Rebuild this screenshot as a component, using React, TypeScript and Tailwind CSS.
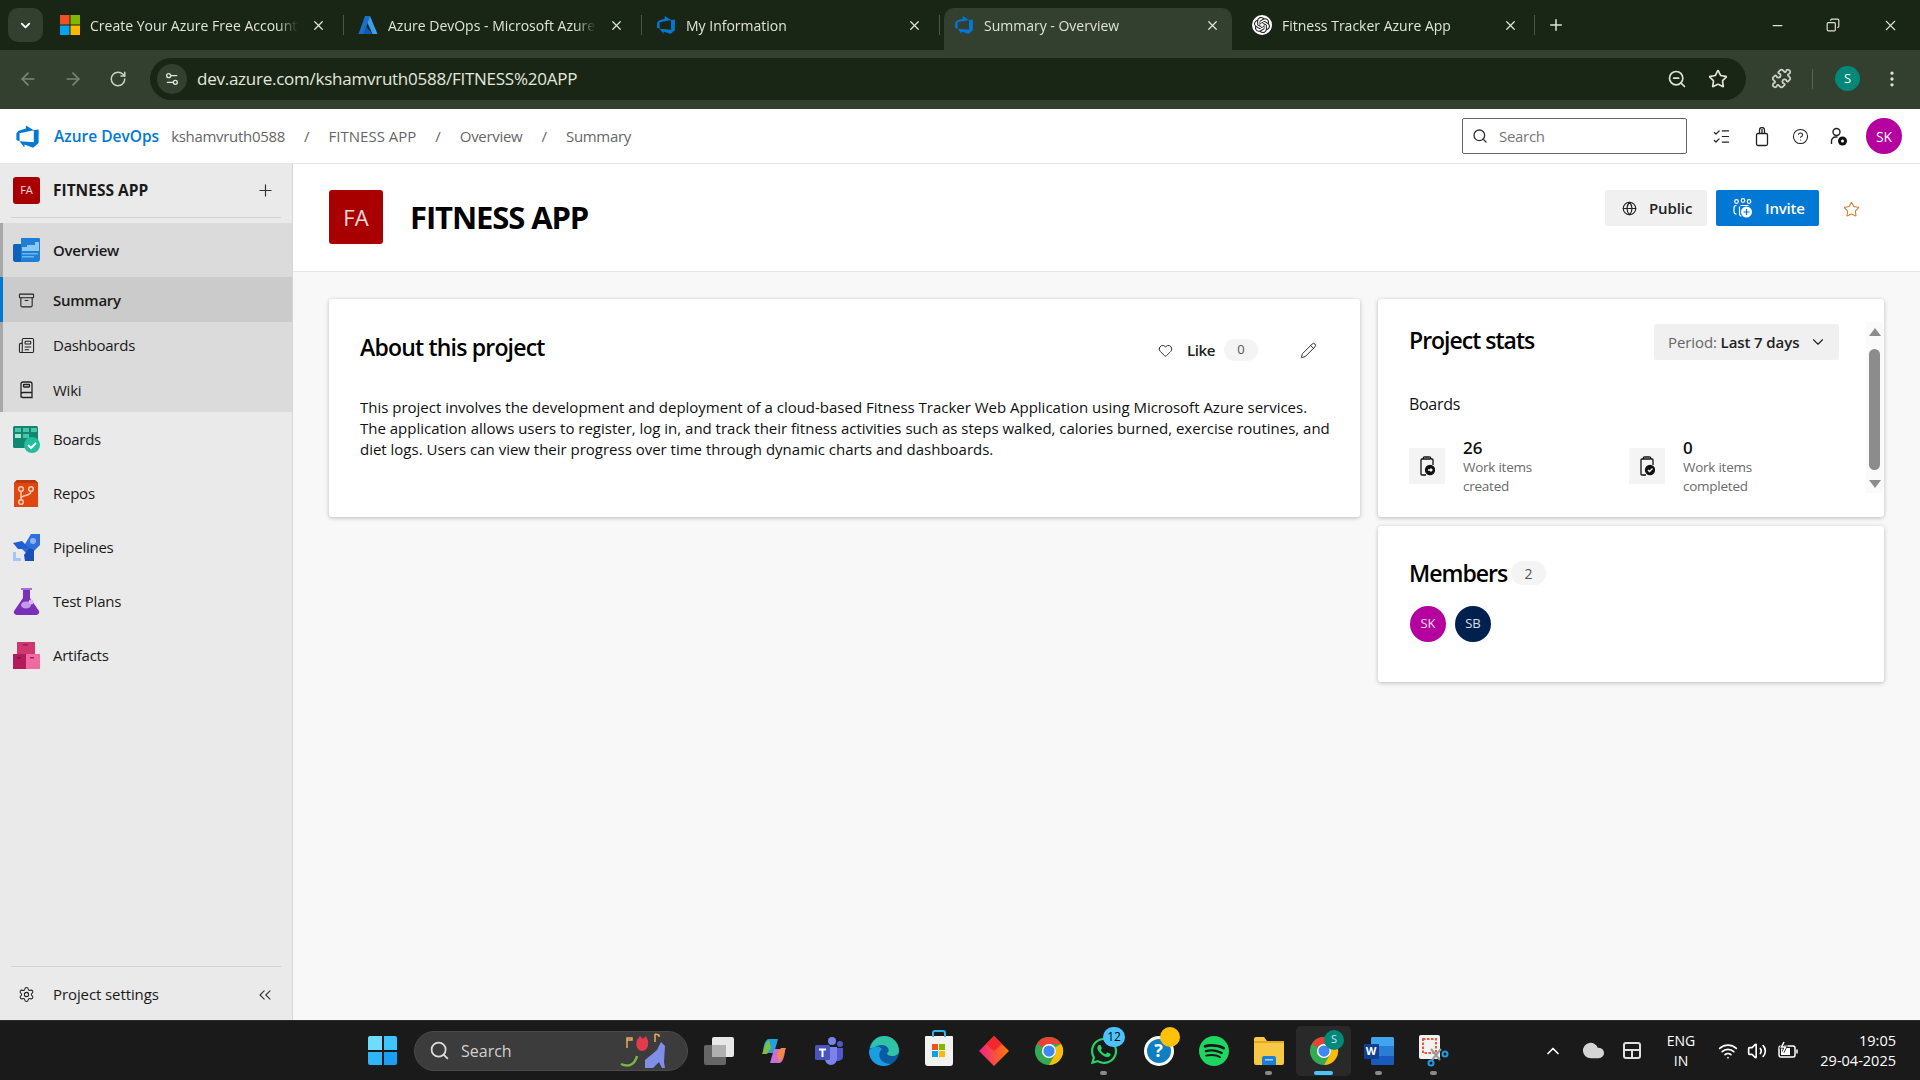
import type { ReactNode } from 'react'
import {
  ArrowLeft, ArrowRight, RotateCw, X, Plus, Minus, ZoomOut, Star, Puzzle, MoreVertical, ListChecks, Search, Globe,
  Heart, Pencil, ChevronDown, ChevronsLeft, Settings, Archive, Newspaper, CircleHelp, ChevronUp, Cloud, Wifi,
  Volume2, Settings2, Copy,
} from 'lucide-react'
import { SiOpenai, SiSpotify } from 'react-icons/si'
import { FaWhatsapp } from 'react-icons/fa'

function DevOpsLogo({ size = 20 }: { size?: number }) {
  return (
    <svg width={size} height={size} viewBox="0 0 18 18" fill="#0078d4">
      <path d="M17 4v9.74l-4 3.28-6.2-2.26V17L3.29 12.41l10.23.8V4.44Zm-3.41.49L7.85 1V3.29L2.58 4.84 1 6.87v4.61l2.26 1V6.57Z" />
    </svg>
  )
}

function MsLogo() {
  return (
    <svg width="20" height="20" viewBox="0 0 20 20">
      <rect width="9.5" height="9.5" fill="#f25022" />
      <rect x="10.5" width="9.5" height="9.5" fill="#7fba00" />
      <rect y="10.5" width="9.5" height="9.5" fill="#00a4ef" />
      <rect x="10.5" y="10.5" width="9.5" height="9.5" fill="#ffb900" />
    </svg>
  )
}

function AzureLogo() {
  return (
    <svg width="20" height="20" viewBox="0 0 20 20">
      <path d="M7 1h5L6 19H0.5Z" fill="#1b6fc9" />
      <path d="M12 1l7.5 18h-5L9.5 8Z" fill="#3aa0ee" />
      <path d="M8.5 12l6 7H5Z" fill="#0f5cb5" />
    </svg>
  )
}

function ChromeLogo({ size = 30 }: { size?: number }) {
  return (
    <svg width={size} height={size} viewBox="0 0 32 32">
      <circle cx="16" cy="16" r="15" fill="#34a853" />
      <path d="M16 1a15 15 0 0 1 13 7.500H16a7.500 7.500 0 0 0-6.500 3.750L3 8.500A15 15 0 0 1 16 1Z" fill="#ea4335" />
      <path d="M29 8.500A15 15 0 0 1 16 31l6.500-11.250A7.500 7.500 0 0 0 22.500 12Z" fill="#fbbc04" />
      <circle cx="16" cy="16" r="7.500" fill="#fff" />
      <circle cx="16" cy="16" r="6" fill="#4285f4" />
    </svg>
  )
}

function BrowserTab({ icon, title, active, last }: { icon: ReactNode; title: string; active?: boolean; last?: boolean }) {
  return (
    <div
      className={`relative mr-[10px] flex h-[42px] w-[288px] items-center pb-[8px] pl-[10px] ${active ? 'rounded-t-[10px] bg-[#333f2f]' : ''}`}
    >
      <span className="flex w-[20px] shrink-0 justify-center">{icon}</span>
      <span className="ml-[10px] w-[208px] overflow-hidden text-[14px] whitespace-nowrap text-[#dfe3da] [mask-image:linear-gradient(to_right,black_90%,transparent)]">
        {title}
      </span>
      <X size={15} strokeWidth={2} className="absolute left-[261px] text-[#dfe3da]" />
      {!active && !last && <span className="absolute right-[-6px] h-[20px] w-px bg-[#4a5546]" />}
    </div>
  )
}

function Crumb({ children, wide }: { children: string; wide?: boolean }) {
  return (
    <>
      <span className="mx-[19px] text-[15px] text-[#666]">/</span>
      <span className={`text-[15px] text-[#666] ${wide ? 'tracking-[0px]' : 'tracking-[-0.3px]'}`}>{children}</span>
    </>
  )
}

function OverviewIcon() {
  return (
    <svg width="27" height="27" viewBox="0 0 27 27">
      <path d="M8 1h18a1 1 0 0 1 1 1v20a3 3 0 0 1-3 3H3a3 3 0 0 1-3-3V9a2 2 0 0 1 2-2h6Z" fill="#1f7fd6" />
      <path d="M0 9a2 2 0 0 1 2-2h6v18H3a3 3 0 0 1-3-3Z" fill="#0f62b8" />
      <path d="M22 5h4v9H9v-4h5V8h8Z" fill="#8cc8f5" />
      <rect x="9" y="16" width="16" height="1.500" fill="#6db3ec" />
      <rect x="9" y="19" width="12" height="1.500" fill="#6db3ec" />
    </svg>
  )
}

function BoardsIcon() {
  return (
    <svg width="27" height="27" viewBox="0 0 27 27">
      <rect y="0" width="25" height="22" rx="1.500" fill="#12876f" />
      <rect x="2" y="2" width="6" height="4" fill="#4cc4a8" />
      <rect x="10" y="2" width="6" height="4" fill="#4cc4a8" />
      <rect x="18" y="2" width="6" height="4" fill="#4cc4a8" />
      <rect x="2" y="8" width="6" height="4" fill="#a8e6d6" />
      <rect x="10" y="8" width="6" height="4" fill="#4cc4a8" />
      <circle cx="19" cy="19" r="8" fill="#1fbf9e" />
      <path d="M15 19l3 3 5-5" stroke="#fff" strokeWidth="2" fill="none" />
    </svg>
  )
}

function ReposIcon() {
  return (
    <svg width="27" height="27" viewBox="0 0 27 27">
      <path d="M4 0h18l3 3v24H1V3Z" fill="#e0460f" />
      <path d="M1 3l3-3h18l3 3Z" fill="#b83a10" />
      <g stroke="#ffc9ae" strokeWidth="1.600" fill="none">
        <circle cx="8" cy="9" r="2.300" />
        <circle cx="18" cy="9" r="2.300" />
        <circle cx="8" cy="22" r="2.300" />
        <path d="M8 11.500v8M18 11.500c0 5-10 3-10 7" />
      </g>
    </svg>
  )
}

function PipelinesIcon() {
  return (
    <svg width="27" height="27" viewBox="0 0 27 27">
      <path d="M27 0v11L16 22l-7-7L18 0Z" fill="#2f6fdc" />
      <path d="M0 9l9-2 7 7-5 1-6 0Z" fill="#1f5fd0" />
      <path d="M11 21l5-7 5 2v11h-9Z" fill="#1a4fb8" />
      <circle cx="20" cy="7" r="3" fill="#8db4f2" />
      <path d="M0 18h3v6h5v3H0Z" fill="#a8c4f5" />
    </svg>
  )
}

function TestPlansIcon() {
  return (
    <svg width="27" height="27" viewBox="0 0 27 27">
      <path d="M8 0h11v2h-2v8l9 13a3 3 0 0 1-3 4H4a3 3 0 0 1-3-4l9-13V2H8Z" fill="#7a2fb8" />
      <path d="M8 0h11v2H8Z" fill="#a46fd8" />
      <ellipse cx="13" cy="17" rx="5" ry="3.500" fill="#c49ae8" />
      <circle cx="18" cy="14" r="2.500" fill="#d7baf0" />
    </svg>
  )
}

function ArtifactsIcon() {
  return (
    <svg width="27" height="27" viewBox="0 0 27 27">
      <rect x="4" y="0" width="18" height="13" fill="#d1376f" />
      <rect x="0" y="12" width="13" height="15" fill="#b31b5a" />
      <rect x="13" y="12" width="14" height="15" fill="#ef6aa0" />
      <rect x="10" y="2" width="5" height="1.500" fill="#9c1a52" />
      <rect x="4" y="15" width="4" height="1.500" fill="#7f1244" />
      <rect x="17" y="15" width="4" height="1.500" fill="#b31b5a" />
    </svg>
  )
}

function WikiIcon() {
  return (
    <svg width="17" height="18" viewBox="0 0 17 18" fill="none" stroke="#222" strokeWidth="1.300">
      <path d="M3 16.500V3a2 2 0 0 1 2-2h7a2 2 0 0 1 2 2v13.500H5a2 2 0 0 1-2-2v-1a2 2 0 0 1 2-2h9" />
      <rect x="5.500" y="3.500" width="6" height="2.500" rx="0.500" />
    </svg>
  )
}

function SubRow({ icon, label, selected }: { icon: ReactNode; label: string; selected?: boolean }) {
  return (
    <div
      className={`flex h-[45px] items-center border-l-[3px] pt-[1px] ${selected ? 'border-[#0078d4] bg-[#cbcbcb] font-semibold' : 'border-[#a8a8a8]'}`}
    >
      <span className="ml-[13px] flex w-[20px] justify-center text-[#222]">{icon}</span>
      <span className="ml-[17px] text-[15px] tracking-[-0.25px] text-[#1a1a1a]">{label}</span>
    </div>
  )
}

function NavRow({ icon, label }: { icon: ReactNode; label: string }) {
  return (
    <div className="flex h-[54px] items-center pl-[13px]">
      <span className="flex w-[27px] justify-center">{icon}</span>
      <span className="ml-[13px] text-[15px] tracking-[-0.25px] text-[#1a1a1a]">{label}</span>
    </div>
  )
}

function Card({ className, children }: { className: string; children: ReactNode }) {
  return <div className={`relative rounded-[3px] bg-white shadow-[0_1px_4px_rgba(0,0,0,0.25)] ${className}`}>{children}</div>
}

function StatTile({ value, line1, line2, done }: { value: string; line1: string; line2: string; done?: boolean }) {
  return (
    <div className="flex w-[220px] items-start">
      <div className="relative mt-[13px] flex h-[36px] w-[36px] items-center justify-center bg-[#f4f4f4]">
        <svg width="15" height="20" viewBox="0 0 15 20" fill="none" stroke="#111" strokeWidth="1.300">
          <path d="M4 3H2a1 1 0 0 0-1 1v14a1 1 0 0 0 1 1h4M11 3h1a1 1 0 0 1 1 1v5M4 3a1 1 0 0 1 1-2h4a1 1 0 0 1 1 2Z" />
          <circle cx="10" cy="14" r="4.500" fill="#111" />
          <path d={done ? 'M8 14l1.500 1.500L12.500 12.500' : 'M8 14h4M10.500 12.500l1.500 1.500-1.500 1.500'} stroke="#fff" />
        </svg>
      </div>
      <div className="mt-[3px] ml-[18px]">
        <div className="text-[17px] leading-[20px] font-semibold text-[#111]">{value}</div>
        <div className="text-[13.5px] leading-[18.5px] tracking-[-0.25px] text-[#6b6b6b]">
          {line1}
          <br />
          {line2}
        </div>
      </div>
    </div>
  )
}

function Avatar({ initials, color }: { initials: string; color: string }) {
  return (
    <div className={`flex h-[36px] w-[36px] items-center justify-center rounded-full text-[13px] text-white/85 ${color}`}>{initials}</div>
  )
}

function TaskIcon({ children, running, active }: { children: ReactNode; running?: boolean; active?: boolean }) {
  return (
    <div className={`relative flex h-[50px] w-[55px] shrink-0 items-center justify-center rounded-[5px] ${active ? 'bg-[#292929]' : ''}`}>
      {children}
      {running && <span className={`absolute bottom-[1px] h-[4px] rounded-full ${active ? 'w-[19px] bg-[#4cc2ff]' : 'w-[7px] bg-[#8a8a8a]'}`} />}
    </div>
  )
}

export default function App() {
  return (
    <div className="flex h-[1080px] w-[1920px] flex-col overflow-hidden bg-white font-['Open_Sans','Noto_Sans',sans-serif]">
      {/* browser tabs */}
      <div className="flex h-[50px] shrink-0 items-end bg-[#192615]">
        <div className="mb-[8px] ml-[8px] flex h-[34px] w-[35px] items-center justify-center self-end rounded-[10px] bg-[#333f2f]">
          <ChevronDown size={15} strokeWidth={3} className="text-white" />
        </div>
        <div className="ml-[7px] flex">
          <BrowserTab icon={<MsLogo />} title="Create Your Azure Free Account" />
          <BrowserTab icon={<AzureLogo />} title="Azure DevOps - Microsoft Azure" />
          <BrowserTab icon={<DevOpsLogo />} title="My Information" />
          <BrowserTab icon={<DevOpsLogo />} title="Summary - Overview" active />
          <BrowserTab
            icon={
              <span className="flex h-[20px] w-[20px] items-center justify-center rounded-full bg-white">
                <SiOpenai size={16} className="text-[#222]" />
              </span>
            }
            title="Fitness Tracker Azure App"
            last
          />
        </div>
        <div className="mb-[8px] ml-[-6px] flex h-[34px] items-center">
          <span className="h-[20px] w-px bg-[#4a5546]" />
          <Plus size={18} className="ml-[12px] text-[#dfe3da]" />
        </div>
        <div className="mb-[8px] ml-auto flex h-[34px] items-center pr-[21px] text-[#dfe3da]">
          <Minus size={15} />
          <Copy size={14} className="ml-[41px] -scale-x-100" />
          <X size={17} strokeWidth={1.500} className="ml-[42px]" />
        </div>
      </div>

      {/* address bar */}
      <div className="flex h-[59px] shrink-0 items-start bg-[#333f2f] pt-[8px]">
        <ArrowLeft size={20} className="mt-[11px] ml-[18px] text-[#7d8679]" />
        <ArrowRight size={20} className="mt-[11px] ml-[25px] text-[#7d8679]" />
        <RotateCw size={18} className="mt-[12px] ml-[26px] text-[#cdd2c8]" />
        <div className="ml-[23px] flex h-[42px] w-[1596px] items-center rounded-full bg-[#192615] pl-[7px]">
          <span className="flex h-[30px] w-[30px] items-center justify-center rounded-full bg-[#333f2f]">
            <Settings2 size={16} className="text-[#e3e6df]" />
          </span>
          <span className="ml-[10px] text-[17px] tracking-[-0.25px] text-[#e3e6df]">dev.azure.com/kshamvruth0588/FITNESS%20APP</span>
          <ZoomOut size={20} className="ml-auto text-[#dfe3da]" />
          <Star size={20} className="mr-[18px] ml-[21px] text-[#dfe3da]" />
        </div>
        <Puzzle size={21} className="mt-[10px] ml-[25px] text-[#cdd2c8]" />
        <span className="mt-[11px] ml-[20px] h-[20px] w-px bg-[#596354]" />
        <span className="mt-[8px] ml-[22px] flex h-[25px] w-[25px] items-center justify-center rounded-full bg-[#00897b] text-[13px] text-white">S</span>
        <MoreVertical size={20} className="mt-[11px] ml-[22px] text-[#dfe3da]" />
      </div>

      {/* devops header */}
      <div className="flex h-[55px] shrink-0 items-center border-b border-[#e6e6e6] bg-white pt-[1px]">
        <span className="ml-[15px]">
          <DevOpsLogo size={25} />
        </span>
        <span className="ml-[14px] text-[15.500px] font-semibold text-[#0078d4]">Azure DevOps</span>
        <span className="ml-[12px] text-[15px] tracking-[-0.3px] text-[#666]">kshamvruth0588</span>
        <Crumb wide>FITNESS APP</Crumb>
        <Crumb>Overview</Crumb>
        <Crumb>Summary</Crumb>
        <div className="mb-[1px] ml-auto flex h-[36px] w-[225px] items-center rounded-[2px] border border-[#666] pl-[9px]">
          <Search size={16} className="text-[#333]" />
          <span className="ml-[11px] text-[15px] tracking-[-0.3px] text-[#767676]">Search</span>
        </div>
        <ListChecks size={19} strokeWidth={1.500} className="ml-[25px] text-[#222]" />
        <svg width="14" height="20" viewBox="0 0 14 20" fill="none" stroke="#222" strokeWidth="1.300" className="ml-[24px]">
          <rect x="1.500" y="6.500" width="11" height="12" rx="1.500" />
          <path d="M4.500 6.500V3a2.500 2.500 0 0 1 5 0v3.500M7 2v5" />
        </svg>
        <CircleHelp size={17} strokeWidth={1.500} className="ml-[23px] text-[#222]" />
        <svg width="18" height="20" viewBox="0 0 18 20" className="ml-[21px]">
          <circle cx="6.500" cy="5" r="3.500" fill="none" stroke="#222" strokeWidth="1.400" />
          <path d="M1.500 17v-3a4 4 0 0 1 4-4h2" fill="none" stroke="#222" strokeWidth="1.400" />
          <circle cx="12.500" cy="14" r="4.500" fill="#111" />
          <circle cx="12.500" cy="14" r="1.500" fill="#fff" />
        </svg>
        <span className="mr-[18px] mb-[1px] ml-[18px] flex h-[36px] w-[36px] items-center justify-center rounded-full bg-[#b4009e] text-[14px] text-white">SK</span>
      </div>

      <div className="flex min-h-0 flex-1">
        {/* sidebar */}
        <aside className="flex w-[293px] shrink-0 flex-col border-r border-[#d6d6d6] bg-[#eaeaea]">
          <div className="flex h-[53px] items-center pl-[13px]">
            <span className="flex h-[27px] w-[27px] items-center justify-center rounded-[3px] bg-[#a80000] text-[11px] text-white/85">FA</span>
            <span className="mt-[1px] ml-[13px] text-[15.500px] font-bold text-[#1a1a1a]">FITNESS APP</span>
            <Plus size={19} strokeWidth={1.500} className="mr-[17px] ml-auto text-[#333]" />
          </div>
          <div className="mx-[11px] border-t border-[#d2d2d2]" />
          <div className="mt-[5px] bg-[#dbdbdb]">
            <div className="flex h-[54px] items-center border-l-[3px] border-[#a8a8a8] pl-[10px]">
              <span className="flex w-[27px] justify-center">
                <OverviewIcon />
              </span>
              <span className="ml-[13px] text-[15px] font-semibold tracking-[-0.25px] text-[#1a1a1a]">Overview</span>
            </div>
            <SubRow icon={<Archive size={17} strokeWidth={1.500} />} label="Summary" selected />
            <SubRow icon={<Newspaper size={17} strokeWidth={1.500} />} label="Dashboards" />
            <SubRow icon={<WikiIcon />} label="Wiki" />
          </div>
          <NavRow icon={<BoardsIcon />} label="Boards" />
          <NavRow icon={<ReposIcon />} label="Repos" />
          <NavRow icon={<PipelinesIcon />} label="Pipelines" />
          <NavRow icon={<TestPlansIcon />} label="Test Plans" />
          <NavRow icon={<ArtifactsIcon />} label="Artifacts" />
          <div className="mx-[11px] mt-auto border-t border-[#d2d2d2]" />
          <div className="flex h-[53px] items-center pt-[2px] pl-[18px]">
            <Settings size={17} strokeWidth={1.500} className="text-[#222]" />
            <span className="ml-[18px] text-[15px] tracking-[-0.1px] text-[#1a1a1a]">Project settings</span>
            <ChevronsLeft size={20} strokeWidth={1.300} className="mr-[17px] ml-auto text-[#333]" />
          </div>
        </aside>

        {/* main */}
        <main className="min-w-0 flex-1 bg-[#f8f8f8]">
          <div className="flex h-[108px] items-start border-b border-[#e6e6e6] bg-white pl-[36px]">
            <span className="mt-[26px] flex h-[54px] w-[54px] items-center justify-center rounded-[3px] bg-[#a80000] text-[22px] text-white/85">FA</span>
            <h1 className="mt-[33px] ml-[27px] text-[31px] leading-[40px] font-bold tracking-[-1.100px] text-black">FITNESS APP</h1>
            <div className="mt-[26px] ml-auto flex h-[36px] w-[102px] items-center rounded-[2px] bg-[#f0f0f0] pl-[17px]">
              <Globe size={15} strokeWidth={1.800} className="text-[#222]" />
              <span className="ml-[12px] text-[15px] font-semibold tracking-[-0.1px] text-[#222]">Public</span>
            </div>
            <div className="mt-[26px] ml-[9px] flex h-[36px] w-[103px] items-center rounded-[2px] bg-[#0078d4] pl-[17px]">
              <svg width="20" height="20" viewBox="0 0 20 20" fill="none" stroke="#fff" strokeWidth="1.200">
                <circle cx="3.500" cy="3.500" r="1.800" />
                <circle cx="10" cy="2.500" r="1.800" />
                <circle cx="16" cy="3.500" r="1.800" />
                <path d="M3.500 7.500C1.500 7.500 1 8.500 1 10v3.500c0 1.500 1 2.500 2.500 2.500M7.500 7.500h8M6.500 8.500v7c0 1.500 1 2.500 2 2.500" />
                <circle cx="13.500" cy="14" r="5.500" fill="#fff" stroke="none" />
                <path d="M13.500 11v6M10.500 14h6" stroke="#0078d4" />
              </svg>
              <span className="ml-[12px] text-[15px] font-semibold tracking-[-0.2px] text-white">Invite</span>
            </div>
            <Star size={17} strokeWidth={1.500} className="mt-[37px] mr-[60px] ml-[24px] text-[#d9792b]" />
          </div>

          <div className="flex items-start gap-[18px] pt-[27px] pl-[36px]">
            <Card className="h-[218px] w-[1031px] px-[31px]">
              <div className="flex h-[98px] items-center">
                <h2 className="mb-[2px] text-[23px] font-semibold tracking-[-0.8px] text-black">About this project</h2>
                <Heart size={15} strokeWidth={1.500} className="mt-[4px] ml-auto text-[#222]" />
                <span className="mt-[4px] ml-[14px] text-[15px] font-semibold tracking-[-0.4px] text-[#222]">Like</span>
                <span className="mt-[4px] ml-[9px] flex h-[22px] w-[34px] items-center justify-center rounded-full bg-[#f4f4f4] text-[13px] text-[#555]">0</span>
                <Pencil size={17} strokeWidth={1.300} className="mt-[4px] mr-[12px] ml-[42px] text-[#222]" />
              </div>
              <p className="text-[15px] leading-[21px] tracking-[-0.01px] whitespace-nowrap text-[#111]">
                This project involves the development and deployment of a cloud-based Fitness Tracker Web Application using Microsoft Azure services.
                <br />
                The application allows users to register, log in, and track their fitness activities such as steps walked, calories burned, exercise routines, and
                <br />
                diet logs. Users can view their progress over time through dynamic charts and dashboards.
              </p>
            </Card>

            <div className="flex w-[506px] flex-col gap-[9px]">
              <Card className="h-[218px] pl-[31px]">
                <div className="flex h-[61px] items-end justify-between pr-[45px]">
                  <h2 className="mb-[3px] text-[23px] font-semibold tracking-[-1px] text-black">Project stats</h2>
                  <div className="flex h-[36px] w-[185px] items-center rounded-[2px] bg-[#f0f0f0] pl-[14px]">
                    <span className="text-[15px] tracking-[-0.1px] whitespace-nowrap text-[#666]">
                      Period: <span className="font-semibold text-[#222]">Last 7 days</span>
                    </span>
                    <ChevronDown size={18} strokeWidth={1.500} className="mr-[12px] ml-auto text-[#222]" />
                  </div>
                </div>
                <div className="mt-[33px] text-[16px] leading-[22px] tracking-[-0.3px] text-[#111]">Boards</div>
                <div className="mt-[20px] flex">
                  <StatTile value="26" line1="Work items" line2="created" />
                  <StatTile value="0" line1="Work items" line2="completed" done />
                </div>
                {/* scrollbar */}
                <div className="absolute top-[23px] right-[1px] flex h-[171px] w-[17px] flex-col items-center bg-[#fafafa]">
                  <span className="mt-[6px] h-0 w-0 border-x-[6px] border-b-[8px] border-x-transparent border-b-[#8c8c8c]" />
                  <span className="mt-[13px] h-[121px] w-[11px] rounded-full bg-[#8c8c8c]" />
                  <span className="mt-[10px] h-0 w-0 border-x-[6px] border-t-[8px] border-x-transparent border-t-[#8c8c8c]" />
                </div>
              </Card>
              <Card className="h-[156px] pl-[32px]">
                <div className="flex items-center pt-[32px]">
                  <h2 className="-ml-[1px] text-[23px] leading-[30px] font-semibold tracking-[-1px] text-black">Members</h2>
                  <span className="ml-[4px] flex h-[24px] w-[35px] items-center justify-center rounded-full bg-[#f4f4f4] text-[14px] text-[#555]">2</span>
                </div>
                <div className="mt-[18px] flex gap-[9px]">
                  <Avatar initials="SK" color="bg-[#b4009e]" />
                  <Avatar initials="SB" color="bg-[#002050]" />
                </div>
              </Card>
            </div>
          </div>
        </main>
      </div>

      {/* windows taskbar */}
      <div className="flex h-[60px] shrink-0 items-center border-t border-[#2c2c2c] bg-[#1a1a1a] pl-[368px] text-white">
        <div className="grid h-[29px] w-[29px] shrink-0 grid-cols-2 gap-[2px]">
          <span className="rounded-tl-[2px] bg-[#6fdcff]" />
          <span className="rounded-tr-[2px] bg-[#3fc4fb]" />
          <span className="rounded-bl-[2px] bg-[#2fb5fa]" />
          <span className="rounded-br-[2px] bg-[#1a9ff5]" />
        </div>
        <div className="ml-[17px] flex h-[40px] w-[274px] shrink-0 items-center rounded-full border border-[#4a4a4a] bg-[#3c3c3c] pl-[14px]">
          <Search size={21} className="text-[#ddd]" />
          <span className="ml-[11px] text-[16px] text-[#d0d0d0]">Search</span>
          <svg width="56" height="38" viewBox="0 0 56 38" className="mr-[12px] ml-auto">
            <path d="M2 32c8 4 14 0 16-8" stroke="#7ab648" strokeWidth="2.500" fill="none" />
            <path d="M18 8l3-4 3 3 3-3 2 5c1 6-2 10-6 10s-7-5-5-11Z" fill="#e23b4e" />
            <path d="M26 28l12-10 4-8 4 4-1 16 1 6h-3l-3-6-6 6H26Z" fill="#7f8fe8" />
            <path d="M8 6h5v2H8Zm0 2v8M36 2l4 1v2M36 2v8" stroke="#f0a860" strokeWidth="1.500" fill="none" />
          </svg>
        </div>
        <div className="ml-[3px] flex shrink-0 items-center">
          <TaskIcon>
            <span className="relative block h-[28px] w-[30px]">
              <span className="absolute bottom-0 left-0 h-[20px] w-[22px] rounded-[2px] bg-[#666]" />
              <span className="absolute top-0 right-0 h-[20px] w-[22px] rounded-[2px] bg-[#e8e8e8]" />
              <span className="absolute top-[8px] left-[8px] h-[12px] w-[14px] bg-[#b0b0b0]" />
            </span>
          </TaskIcon>
          <TaskIcon>
            <svg width="28" height="28" viewBox="0 0 28 28">
              <path d="M9 2h9l-4 14H3c0-6 2-14 6-14Z" fill="#1fa3d8" />
              <path d="M6 6l3-3 2 8-4 6H2Z" fill="#7bc043" />
              <path d="M19 26h-9l4-14h11c0 6-2 14-6 14Z" fill="#c96dd8" />
              <path d="M22 22l-3 3-2-8 4-6h5Z" fill="#f58a3c" />
            </svg>
          </TaskIcon>
          <TaskIcon>
            <svg width="30" height="30" viewBox="0 0 30 30">
              <circle cx="18" cy="5" r="4" fill="#7b83eb" />
              <circle cx="26" cy="8" r="3" fill="#5059c9" />
              <path d="M21 12h8v9a5 5 0 0 1-8 3Z" fill="#5059c9" />
              <path d="M10 11h13v12a6 6 0 0 1-12 0Z" fill="#7b83eb" />
              <rect x="1" y="9" width="15" height="15" rx="1.500" fill="#4b53bc" />
              <path d="M5 12.500h7v2H9.500V21h-2v-6.500H5Z" fill="#fff" />
            </svg>
          </TaskIcon>
          <TaskIcon>
            <svg width="30" height="30" viewBox="0 0 30 30">
              <circle cx="15" cy="15" r="15" fill="#0c59a4" />
              <path d="M1 12C3 4 9 0 15 0c8 0 15 6 15 15 0 3-3 5-7 5-3 0-5-1-5-3 2-1 2-3 1-5-2-3-7-4-11-2-3 1-6 3-7 2Z" fill="#2ec4a5" />
              <path d="M15 30C7 30 0 24 0 15c3-5 10-6 13-2-3 2-4 8 0 12 2 2 6 3 9 3-2 1-5 2-7 2Z" fill="#1b9de2" />
            </svg>
          </TaskIcon>
          <TaskIcon>
            <span className="relative flex h-[30px] w-[28px] items-center justify-center rounded-t-[1px] rounded-b-[3px] bg-[#f2f2f2]">
              <span className="absolute top-[-6px] h-[7px] w-[14px] rounded-t-[3px] border-2 border-b-0 border-[#31b5e8]" />
              <span className="grid h-[13px] w-[13px] grid-cols-2 gap-px">
                <span className="bg-[#f25022]" />
                <span className="bg-[#7fba00]" />
                <span className="bg-[#00a4ef]" />
                <span className="bg-[#ffb900]" />
              </span>
            </span>
          </TaskIcon>
          <TaskIcon>
            <svg width="30" height="30" viewBox="0 0 30 30">
              <defs>
                <linearGradient id="diamond" x1="0" x2="1">
                  <stop offset="0" stopColor="#f0208a" />
                  <stop offset="1" stopColor="#ff7a00" />
                </linearGradient>
              </defs>
              <path d="M15 0l15 15-15 15L0 15Z" fill="url(#diamond)" />
              <path d="M15 0l8 8-8 7-8-7Z" fill="#f5262d" />
            </svg>
          </TaskIcon>
          <TaskIcon>
            <ChromeLogo />
          </TaskIcon>
          <TaskIcon running>
            <FaWhatsapp size={30} className="text-[#25d366]" />
            <span className="absolute top-[1px] left-[27px] flex h-[20px] w-[22px] items-center justify-center rounded-full bg-[#4cc2ff] text-[12px] text-black">12</span>
          </TaskIcon>
          <TaskIcon>
            <span className="flex h-[30px] w-[30px] items-center justify-center rounded-full border-[3px] border-white bg-[#0f7fc4] text-[18px] font-bold text-white">?</span>
            <span className="absolute top-[1px] left-[29px] h-[20px] w-[20px] rounded-full bg-[#ffc107]" />
          </TaskIcon>
          <TaskIcon>
            <SiSpotify size={30} className="text-[#1ed760]" />
          </TaskIcon>
          <TaskIcon running>
            <svg width="30" height="28" viewBox="0 0 30 28">
              <path d="M0 2a2 2 0 0 1 2-2h8l3 4h15a2 2 0 0 1 2 2v20a2 2 0 0 1-2 2H2a2 2 0 0 1-2-2Z" fill="#f6c844" />
              <path d="M0 4h30v2H0Z" fill="#e5a91f" />
              <path d="M8 21a2 2 0 0 1 2-2h10a2 2 0 0 1 2 2v7H8Z" fill="#1b7fd8" />
              <rect x="11" y="22" width="8" height="1.500" fill="#9dd0f5" />
            </svg>
          </TaskIcon>
          <TaskIcon running active>
            <ChromeLogo />
            <span className="absolute top-[4px] left-[28px] flex h-[20px] w-[20px] items-center justify-center rounded-full bg-[#00897b] text-[11px] text-white/80">S</span>
          </TaskIcon>
          <TaskIcon running>
            <span className="relative block h-[28px] w-[30px]">
              <span className="absolute top-0 right-0 h-[28px] w-[23px] rounded-[2px] bg-[#2b7cd3]" />
              <span className="absolute top-0 right-0 h-[9px] w-[23px] rounded-t-[2px] bg-[#41a5ee]" />
              <span className="absolute right-0 bottom-0 h-[9px] w-[23px] rounded-b-[2px] bg-[#185abd]" />
              <span className="absolute top-[7px] left-0 flex h-[15px] w-[15px] items-center justify-center rounded-[1px] bg-[#103f91] text-[11px] font-bold text-white">W</span>
            </span>
          </TaskIcon>
          <TaskIcon running>
            <svg width="30" height="32" viewBox="0 0 30 32">
              <rect x="0" y="0" width="21" height="24" rx="2" fill="#f2f2f2" />
              <rect x="4" y="4" width="13" height="14" fill="none" stroke="#e25c3c" strokeWidth="2" strokeDasharray="2.500 1.500" />
              <path d="M12 14l9 11M22 14l-9 11" stroke="#9a9a9a" strokeWidth="2" />
              <circle cx="12" cy="28" r="2.500" fill="none" stroke="#1b9de2" strokeWidth="2" />
              <circle cx="26" cy="19" r="2.500" fill="none" stroke="#1b9de2" strokeWidth="2" />
            </svg>
          </TaskIcon>
        </div>
        <ChevronUp size={20} className="ml-[82px] shrink-0 text-white" />
        <Cloud size={23} fill="#d4d4d4" className="ml-[19px] shrink-0 text-[#d4d4d4]" />
        <div className="ml-[18px] flex h-[17px] w-[18px] shrink-0 flex-col rounded-[3px] border-2 border-[#e0e0e0]">
          <span className="mt-[5px] h-[2px] bg-[#e0e0e0]" />
          <span className="mx-auto h-[6px] w-[2px] bg-[#e0e0e0]" />
        </div>
        <div className="ml-[19px] w-[42px] shrink-0 text-center text-[14px] leading-[20px] text-white">
          ENG
          <br />
          IN
        </div>
        <Wifi size={20} className="ml-[16px] shrink-0" />
        <Volume2 size={20} className="ml-[9px] shrink-0" />
        <svg width="22" height="20" viewBox="0 0 22 20" fill="none" stroke="#fff" strokeWidth="1.500" className="ml-[10px] shrink-0">
          <rect x="2" y="5" width="16" height="11" rx="2" />
          <rect x="4" y="7" width="9" height="7" fill="#fff" stroke="none" />
          <path d="M20 8.500v4" />
          <path d="M7 1L4.500 6h4L6 11" stroke="#1a1a1a" strokeWidth="3" />
          <path d="M7 1L4.500 6h4L6 11" />
        </svg>
        <div className="ml-[17px] w-[80px] shrink-0 text-right text-[14.500px] leading-[20px] whitespace-nowrap">
          19:05
          <br />
          29-04-2025
        </div>
      </div>
    </div>
  )
}
